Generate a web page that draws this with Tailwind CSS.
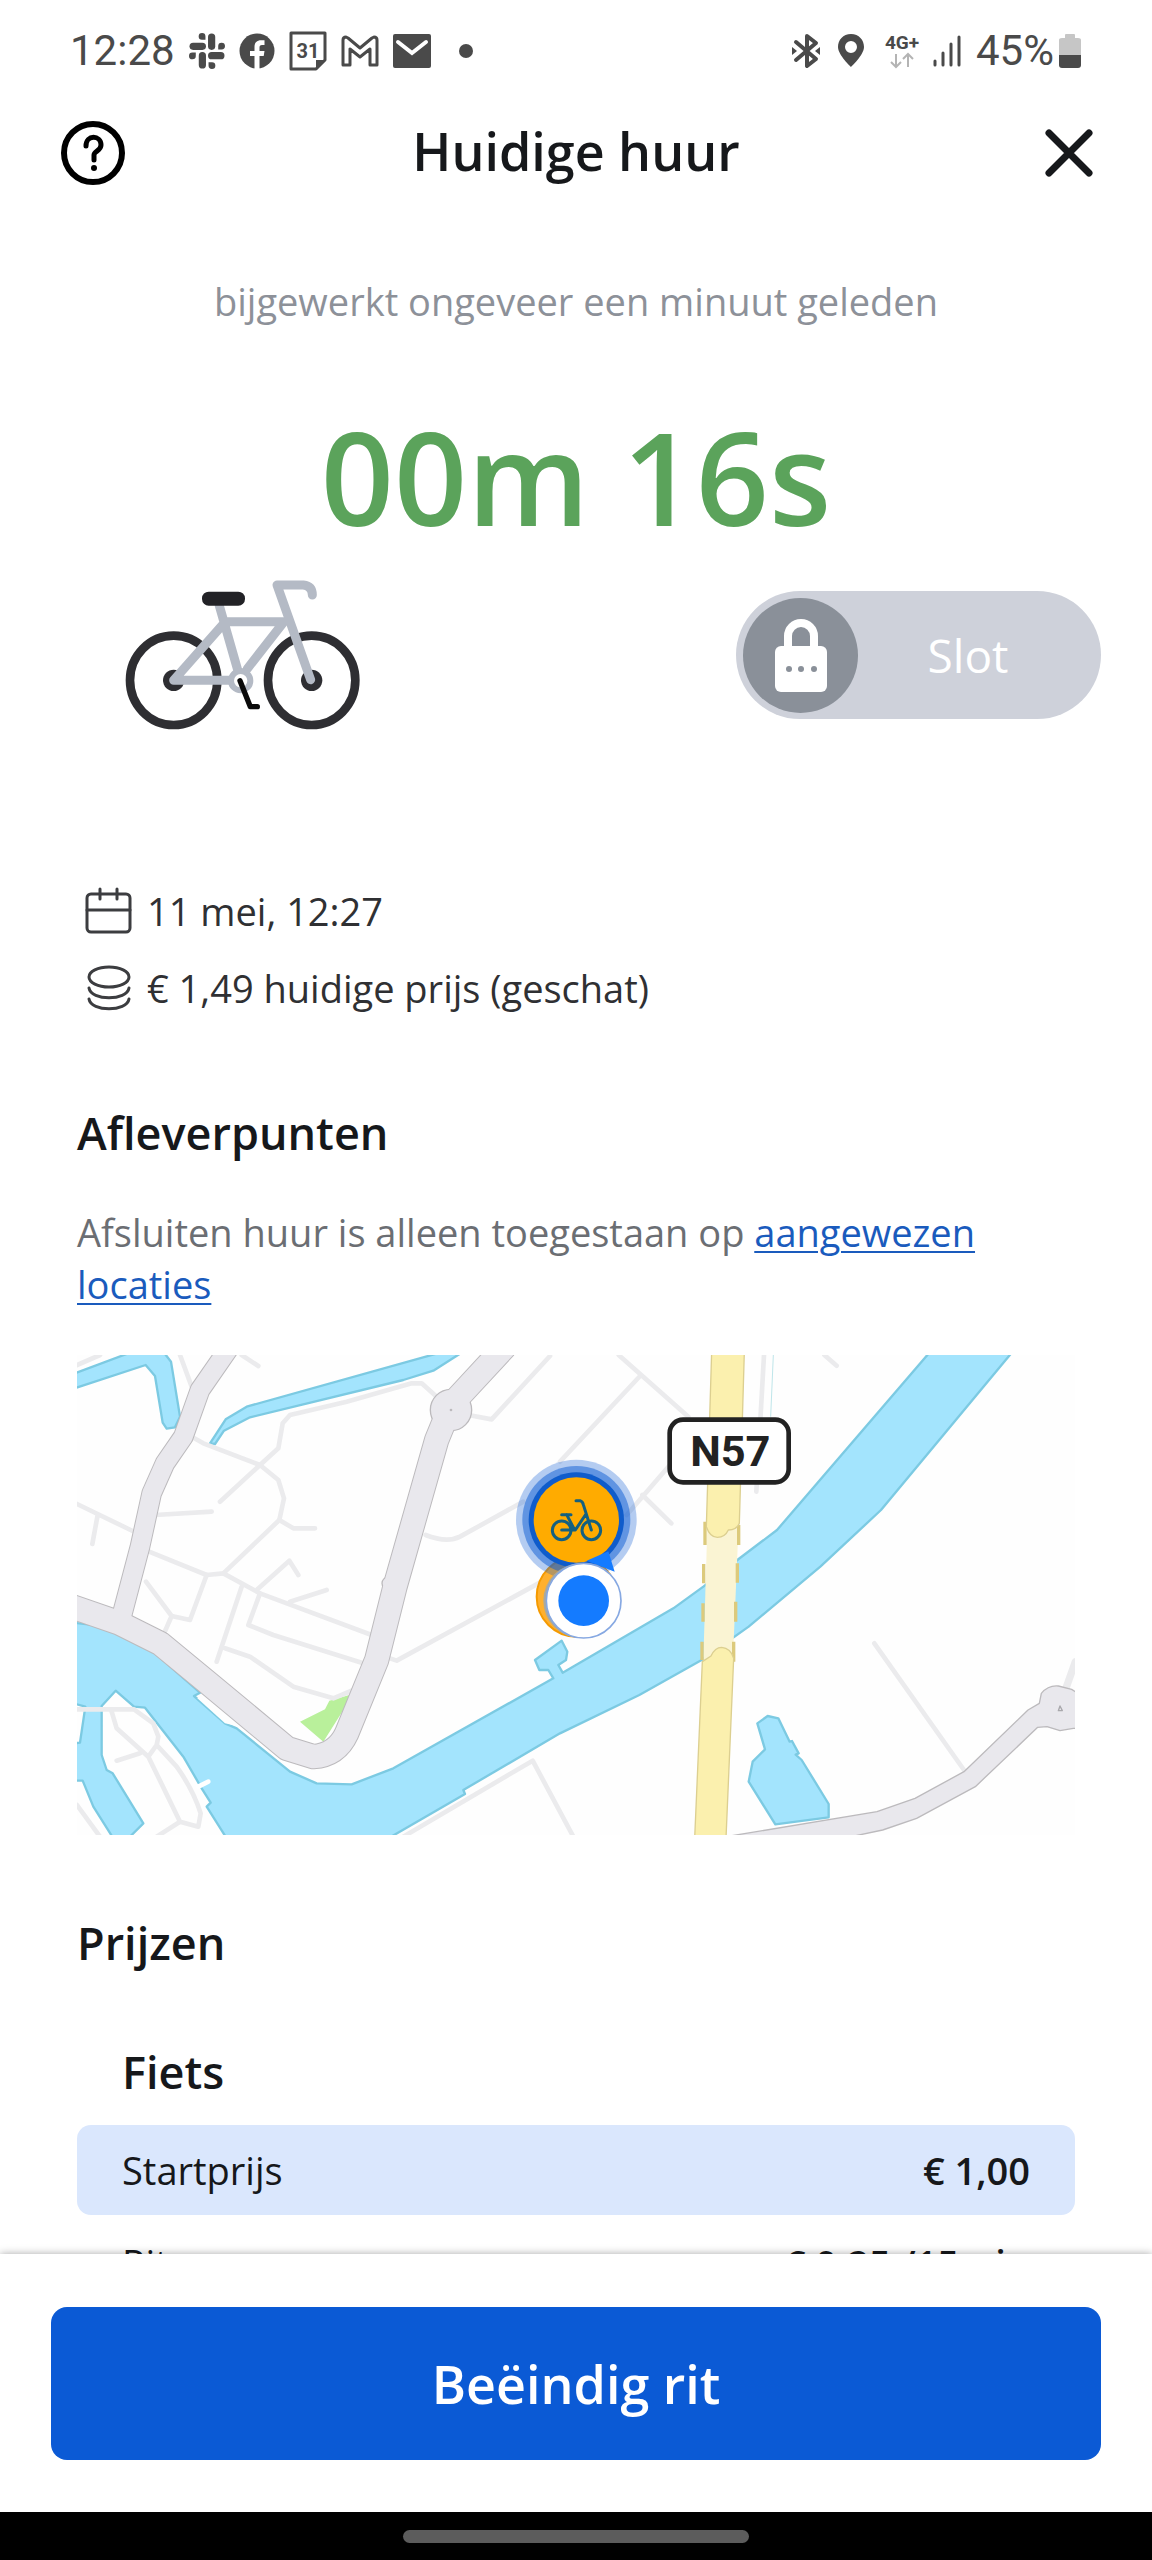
<!DOCTYPE html>
<html lang="nl">
<head>
    <meta charset="UTF-8">
    <meta name="viewport" content="width=device-width, initial-scale=1.0">
    <title>Huidige huur</title>
    <script src="https://cdn.jsdelivr.net/npm/@tailwindcss/browser@4"></script>
</head>
<body class="h-screen flex flex-col bg-white text-[#16181b] font-['Open_Sans',sans-serif]">
    <!-- Status bar -->
    <div class="flex shrink-0 items-center justify-between h-[102px] px-[70px] text-[42px] leading-[48px] text-[#4a4a4a] font-['Roboto',sans-serif]">
        <div class="flex items-center gap-[14px]">
            <span>12:28</span>
            <!-- Slack -->
            <svg class="w-[36px] h-[36px]" viewBox="0 0 35 35">
                <defs>
                    <g id="slack-arm">
                        <path d="M22 4V13" stroke="currentColor" stroke-width="7" stroke-linecap="round"/>
                        <path d="M16 6.600H12.800A3.300 3.300 0 1 1 16 3.300Z" fill="currentColor"/>
                    </g>
                </defs>
                <use href="#slack-arm"/>
                <use href="#slack-arm" transform="rotate(90 17.500 17.500)"/>
                <use href="#slack-arm" transform="rotate(180 17.500 17.500)"/>
                <use href="#slack-arm" transform="rotate(270 17.500 17.500)"/>
            </svg>
            <!-- Facebook -->
            <svg class="w-[36px] h-[36px]" viewBox="0 0 36 36">
                <circle cx="18" cy="18" r="17.500" fill="currentColor"/>
                <path d="M15.500 36V23h-4.500v-5h4.500v-4c0-4.500 2.500-6.700 6.500-6.700h3.500v4.600H23c-2 0-2.500 1-2.500 2.500V18h5l-.8 5h-4.200v13z" fill="#fff"/>
            </svg>
            <!-- Calendar -->
            <svg class="w-[38px] h-[40px]" viewBox="0 0 38 40">
                <path d="M2 2H36V29L27 38H2Z" fill="none" stroke="currentColor" stroke-width="3" stroke-linejoin="round"/>
                <path d="M27 38V29H36Z" fill="currentColor"/>
                <text x="19" y="27" text-anchor="middle" font-size="20" font-weight="700" fill="currentColor">31</text>
            </svg>
            <!-- Gmail -->
            <svg class="w-[38px] h-[32px]" viewBox="0 0 38 32">
                <path d="M2 30V5Q2 2 5 2L7 3L19 13L31 3L33 2Q36 2 36 5V30H29V14L19 22L9 14V30Z" fill="none" stroke="currentColor" stroke-width="3" stroke-linejoin="round"/>
            </svg>
            <!-- Mail -->
            <svg class="w-[38px] h-[34px]" viewBox="0 0 38 34">
                <rect width="38" height="34" rx="2" fill="currentColor"/>
                <path d="M5 8L19 19L33 8" fill="none" stroke="#fff" stroke-width="4" stroke-linecap="round"/>
            </svg>
            <span class="ml-[14px] w-[14px] h-[14px] rounded-full bg-[#4a4a4a]"></span>
        </div>
        <div class="flex items-center">
            <!-- Bluetooth -->
            <svg class="w-[30px] h-[36px] mr-[16px]" viewBox="0 0 30 36">
                <path d="M5 9L25 26L16 33V3L25 10L5 27" fill="none" stroke="currentColor" stroke-width="4" stroke-linecap="round" stroke-linejoin="round"/>
                <path d="M1 14L6 18L1 22ZM29 14L24 18L29 22Z" fill="currentColor"/>
            </svg>
            <!-- Location -->
            <svg class="w-[28px] h-[34px] mr-[18px]" viewBox="0 0 28 34">
                <path d="M14 0C6 0 1 6 1 13C1 21 14 33 14 33S27 21 27 13C27 6 22 0 14 0ZM14 7A6 6 0 1 1 14 19A6 6 0 1 1 14 7Z" fill="currentColor" fill-rule="evenodd"/>
            </svg>
            <!-- Network -->
            <svg class="w-[38px] h-[36px] mr-[11px]" viewBox="0 0 38 36">
                <text x="19" y="16" text-anchor="middle" font-size="19" font-weight="700" fill="currentColor">4G+</text>
                <path d="M13 21V34M8 29L13 34L18 29M25 34V21M20 26L25 21L30 26" fill="none" stroke="#b4b4b4" stroke-width="2"/>
            </svg>
            <!-- Signal -->
            <svg class="w-[30px] h-[32px] mr-[14px]" viewBox="0 0 30 32">
                <path d="M3 26V30M11 18V30M19 9V30M27 2V30" fill="none" stroke="currentColor" stroke-width="3" stroke-linecap="round"/>
            </svg>
            <span class="mr-[4px]">45%</span>
            <!-- Battery -->
            <svg class="w-[24px] h-[34px]" viewBox="0 0 24 34">
                <path d="M1 21V6Q1 4 4 4H7V1Q7 0 8 0H16Q17 0 17 1V4H20Q23 4 23 6V21Z" fill="#c6c6c6"/>
                <path d="M1 21H23V31Q23 34 20 34H4Q1 34 1 31Z" fill="currentColor"/>
            </svg>
        </div>
    </div>

    <!-- Header -->
    <header class="grid grid-cols-[1fr_auto_1fr] shrink-0 items-center h-[102px] px-[58px]">
        <button type="button" aria-label="Hulp" class="justify-self-start">
            <svg class="w-[70px] h-[66px]" viewBox="0 0 70 66" fill="none" stroke="#000" stroke-width="6" stroke-linecap="round">
                <circle cx="35" cy="33" r="29"/>
                <path d="M28 26C28 14 43 15 43 25C43 31 36 31 36 35V40" stroke-width="5"/>
                <circle cx="36" cy="48" r="3" fill="#000" stroke="none"/>
            </svg>
        </button>
        <h1 class="pb-[4px] text-[52px] leading-[64px] font-semibold">Huidige huur</h1>
        <button type="button" aria-label="Sluiten" class="justify-self-end">
            <svg class="w-[50px] h-[50px]" viewBox="0 0 50 50" fill="none" stroke="#16181b" stroke-width="7" stroke-linecap="round">
                <path d="M5 5L45 45M45 5L5 45"/>
            </svg>
        </button>
    </header>

    <main class="flex-1 min-h-0 overflow-hidden">
        <!-- Timer -->
        <p class="mt-[71px] text-center text-[38px] leading-[52px] text-[#8d9199]">bijgewerkt ongeveer een minuut geleden</p>
        <p class="mt-[70px] text-center text-[128px] leading-[160px] font-semibold text-[#5ba35b]">00m 16s</p>

        <!-- Bike and lock -->
        <div class="flex items-center justify-between mt-[22px] pl-[125px] pr-[51px]">
            <svg class="w-[236px] h-[152px]" viewBox="135 115 708 456" fill="none">
                <g stroke="#2e2e32" stroke-width="26">
                    <ellipse cx="281" cy="419" rx="131" ry="134"/>
                    <ellipse cx="695" cy="419" rx="131" ry="134"/>
                </g>
                <circle cx="281" cy="419" r="32" fill="#2e2e32"/>
                <circle cx="695" cy="419" r="32" fill="#2e2e32"/>
                <g stroke="#b4bac5" stroke-width="27" stroke-linecap="round" stroke-linejoin="round">
                    <path d="M281 419L436 243H612L502 384M281 419H450M418 195L472 384"/>
                    <path d="M692 417L591 133H670Q697 136 697 163"/>
                </g>
                <circle cx="482" cy="420" r="29" stroke="#b4bac5" stroke-width="18" fill="#fff"/>
                <path d="M480 420L511 498H532" stroke="#0a0a0a" stroke-width="16" stroke-linecap="round" stroke-linejoin="round"/>
                <rect x="366" y="153" width="129" height="42" rx="20" fill="#222226"/>
            </svg>
            <button type="button" class="flex items-center w-[365px] h-[128px] p-[7px] rounded-full bg-[#ced1da] text-white">
                <span class="flex items-center justify-center w-[115px] h-[115px] rounded-full bg-[#8a9099]">
                    <svg class="w-[52px] h-[74px]" viewBox="0 0 52 74">
                        <path d="M13 34V18A13 13 0 0 1 39 18V34" fill="none" stroke="#fff" stroke-width="8"/>
                        <rect y="28" width="52" height="46" rx="6" fill="#fff"/>
                        <g fill="#8a9099">
                            <circle cx="14" cy="51" r="3"/>
                            <circle cx="26" cy="51" r="3"/>
                            <circle cx="39" cy="51" r="3"/>
                        </g>
                    </svg>
                </span>
                <span class="flex-1 pr-[16px] text-[46px] leading-[64px]">Slot</span>
            </button>
        </div>

        <!-- Rental details -->
        <ul class="mt-[154px] px-[85px] text-[38px] leading-[52px] text-[#2f3033]">
            <li class="flex items-center gap-[14px]">
                <svg class="w-[48px] h-[48px]" viewBox="0 0 48 48" fill="none" stroke="#3c3d40" stroke-width="3" stroke-linecap="round">
                    <rect x="2" y="7" width="43" height="38" rx="4"/>
                    <path d="M2 23H45M15 2V12M32 2V12"/>
                </svg>
                11 mei, 12:27
            </li>
            <li class="flex items-center gap-[14px] mt-[25px]">
                <svg class="w-[48px] h-[48px]" viewBox="0 0 48 48" fill="none" stroke="#3c3d40" stroke-width="3" stroke-linecap="round">
                    <ellipse cx="24" cy="13" rx="20" ry="10"/>
                    <path d="M4 24C6 37 42 37 44 24M4 35C6 48 42 48 44 35"/>
                </svg>
                € 1,49 huidige prijs (geschat)
            </li>
        </ul>

        <!-- Drop-off points -->
        <section class="px-[77px]">
            <h2 class="mt-[89px] text-[45px] leading-[60px] font-semibold">Afleverpunten</h2>
            <p class="mt-[43px] text-[38px] leading-[52px] text-[#6b6e73]">
                Afsluiten huur is alleen toegestaan op
                <a href="#" class="text-[#1a5bbd] underline decoration-2 underline-offset-4">aangewezen locaties</a>
            </p>
            <svg class="block w-full mt-[45px]" viewBox="51 45 2994 1440" fill="none" stroke-linejoin="round">
                <rect x="51" y="45" width="2994" height="1440" fill="#fefefe"/>
                <!-- Water -->
                <g fill="#a3e4fd" stroke="#7ccae2" stroke-width="7">
                    <path d="M40 848L130 858L280 935L420 1058L402 1068L495 1150L530 1165L690 1295L770 1330L875 1333L1000 1285L1480 1015L1465 990L1438 990L1425 960L1505 902L1522 935L1518 960L1495 975L1508 998L1840 805L1930 740L2032 660L2151 570L2615 30L2862 30L2463 510L2281 680L2066 860L1925 960L1738 1065L1500 1180L1210 1350L1215 1362L985 1495H500L440 1400L452 1388L425 1345L370 1250L255 1103L222 1100L167 1052L125 1098V1245L140 1290L158 1300L250 1450L205 1495H160L100 1400L68 1322H40V1210L60 1208L76 1100L40 1090Z"/>
                    <path d="M40 102L210 38H312L333 65L360 230L345 262L320 266L308 248L285 108L257 75L40 146Z"/>
                    <path d="M450 310L497 238L560 200L1140 38H1205L1120 92L1030 120L570 232L492 272L465 312Z"/>
                    <path d="M2123 1128L2155 1135L2189 1205L2196 1203L2216 1240L2207 1244L2225 1260L2306 1392V1432L2146 1453L2066 1325L2078 1265L2115 1228L2092 1150Z"/>
                </g>
                <path d="M422 1064L530 1158L495 1150L412 1075Z" fill="#fefefe"/>
                <path d="M720 1145L795 1108L808 1082L868 1065L850 1110L790 1205Z" fill="#b9f09b"/>
                <path d="M2140 45L2132 230" stroke="#bfe6ea" stroke-width="3"/>
                <!-- Streets -->
                <g stroke="#ebebed" stroke-width="14" stroke-linecap="round">
                    <path d="M51 75L120 45M360 45L395 140M545 45L595 78"/>
                    <path d="M395 290L430 310L600 375L655 420L672 475L658 540L490 700L440 705L260 632"/>
                    <path d="M480 485L600 375L655 325L668 250L690 225L860 185L1055 130L1085 130L1135 175"/>
                    <path d="M285 525L455 515M51 492L218 573M113 525L97 612M658 540L700 565H765"/>
                    <path d="M490 700L600 760L935 885M440 705L390 840L335 828L258 725M335 828L310 885"/>
                    <path d="M545 740L470 965M495 925L570 950L700 1040L820 1075L880 1050"/>
                    <path d="M600 760L565 855L640 885L905 968M590 750L688 662L715 705M690 785L800 750"/>
                    <path d="M1225 225L1295 238L1470 48M1097 585Q1160 610 1200 590L1390 485M975 950L1010 962L1500 695"/>
                    <path d="M1500 365L1743 105M1676 45L1885 230M1700 525L1860 340M1747 465L1834 550M2112 45L2089 455M2293 45L2330 77"/>
                    <path d="M2443 910L2712 1290M1030 1490L1418 1262L1540 1490"/>
                    <path d="M51 1108H222L280 1150L295 1190L290 1215L350 1280Q400 1350 422 1420L415 1460L360 1445L265 1250L290 1215M155 1115L170 1165L265 1250M170 1262L240 1240M360 1445L290 1490M51 1395L120 1490"/>
                    <path d="M3046 965L3016 1050" stroke-width="22"/>
                    <path d="M415 1340L445 1325" stroke="#fff"/>
                </g>
                <!-- Main roads: casing first, then fill -->
                <g stroke="#bcbabd">
                    <path d="M510 20L420 150L370 290L315 370L275 460L240 620L182 840" stroke-width="62"/>
                    <path d="M30 798L180 850L300 910L440 1025L680 1225L760 1250Q830 1245 860 1180L950 960L1005 740L1130 300L1173 195L1335 20" stroke-width="76"/>
                    <circle cx="1173" cy="210" r="62" fill="#e9e8ed" stroke-width="4"/>
                    <circle cx="985" cy="730" r="19" fill="#e9e8ed" stroke-width="4"/>
                </g>
                <g stroke="#e9e8ed">
                    <path d="M510 20L420 150L370 290L315 370L275 460L240 620L182 840" stroke-width="56"/>
                    <path d="M30 798L180 850L300 910L440 1025L680 1225L760 1250Q830 1245 860 1180L950 960L1005 740L1130 300L1173 195L1335 20" stroke-width="70"/>
                </g>
                <circle cx="1173" cy="210" r="4" fill="#bcbabd"/>
                <path d="M1998 1490L2451 1415L2565 1375L2712 1295L2904 1110L2938 1090L2944 1060Q2965 1035 2995 1038L3035 1048L3070 1070V1165H3040L3000 1172L2961 1160L2933 1162L2746 1340L2570 1435L2468 1470L2350 1495Z" fill="#e9e8ed" stroke="#bcbabd" stroke-width="4"/>
                <path d="M2995 1112L3000 1098L3007 1112Z" stroke="#a9a8ac" stroke-width="4"/>
                <!-- N57 with bridge -->
                <path d="M1942 560L2036 550L2019 950L1930 960Z" fill="#faf4d3"/>
                <path d="M1935 545V615M1931 672V730M1929 790V845M1926 905V960M2036 555V615M2032 670V728M2027 785V845M2021 905V965" stroke="#dcca7c" stroke-width="10"/>
                <g fill="#fbf0ae" stroke="#dccf90" stroke-width="4">
                    <path d="M1955 35H2053L2038 550Q2030 570 2005 570Q1995 592 1972 592Q1950 592 1939 560Z"/>
                    <path d="M1927 965L1953 948Q1965 922 1985 922Q2012 924 2021 955L1998 1495H1904Z"/>
                </g>
                <rect x="1829" y="239" width="357" height="188" rx="40" fill="#fff" stroke="#222" stroke-width="14"/>
                <text x="2011" y="378" text-anchor="middle" font-size="130" font-weight="700" font-family="Roboto, sans-serif" fill="#222">N57</text>
                <!-- Drop-off pin -->
                <circle cx="1550" cy="770" r="120" fill="#ffb02e" stroke="#f59a00" stroke-width="6"/>
                <circle cx="1549" cy="540" r="181" fill="#0b5bd3" fill-opacity=".3"/>
                <circle cx="1549" cy="540" r="162" fill="#0b5bd3" fill-opacity=".5"/>
                <circle cx="1549" cy="540" r="143" fill="#0f5ccb"/>
                <circle cx="1549" cy="540" r="128" fill="#ffab00"/>
                <g stroke="#14607f" stroke-width="9" stroke-linecap="round" stroke-linejoin="round">
                    <circle cx="1505" cy="571" r="28"/>
                    <circle cx="1594" cy="571" r="28"/>
                    <path d="M1505 570H1546L1578 522M1505 524H1533M1520 524L1544 570M1548 482H1560Q1568 484 1570 494L1594 570"/>
                </g>
                <!-- Own position -->
                <path d="M1580 662L1645 634L1664 695Z" fill="#147bff"/>
                <circle cx="1562" cy="782" r="112" fill="#a9a9a0"/>
                <circle cx="1571" cy="782" r="112" fill="#fff" stroke="#86a8e2" stroke-width="5"/>
                <circle cx="1571" cy="782" r="76" fill="#147bff"/>
            </svg>
        </section>

        <!-- Prices -->
        <section class="px-[77px]">
            <h2 class="mt-[78px] text-[45px] leading-[60px] font-semibold">Prijzen</h2>
            <table class="w-full mt-[69px] text-[38px] leading-[52px]">
                <caption class="pl-[45px] pb-[23px] text-left text-[45px] leading-[60px] font-semibold">Fiets</caption>
                <tbody>
                    <tr class="bg-[#dae7fd]">
                        <th scope="row" class="h-[90px] pl-[45px] rounded-l-[14px] text-left font-normal">Startprijs</th>
                        <td class="pr-[45px] rounded-r-[14px] text-right font-semibold">€ 1,00</td>
                    </tr>
                    <tr>
                        <th scope="row" class="h-[96px] pl-[45px] text-left font-normal">Rit</th>
                        <td class="pr-[45px] text-right font-semibold">€ 0,25 /15min</td>
                    </tr>
                </tbody>
            </table>
        </section>
    </main>

    <!-- Footer -->
    <footer class="relative shrink-0 px-[51px] pt-[53px] pb-[52px] bg-white shadow-[0_0_8px_rgba(0,0,0,0.35)]">
        <button type="button" class="block w-full h-[153px] rounded-[16px] bg-[#0b5ad5] text-white text-[52px] leading-[64px] font-semibold">Beëindig rit</button>
    </footer>
    <div class="relative flex shrink-0 items-center justify-center h-[48px] bg-black">
        <span class="w-[346px] h-[13px] rounded-full bg-[#5c5c5c]"></span>
    </div>
</body>
</html>
